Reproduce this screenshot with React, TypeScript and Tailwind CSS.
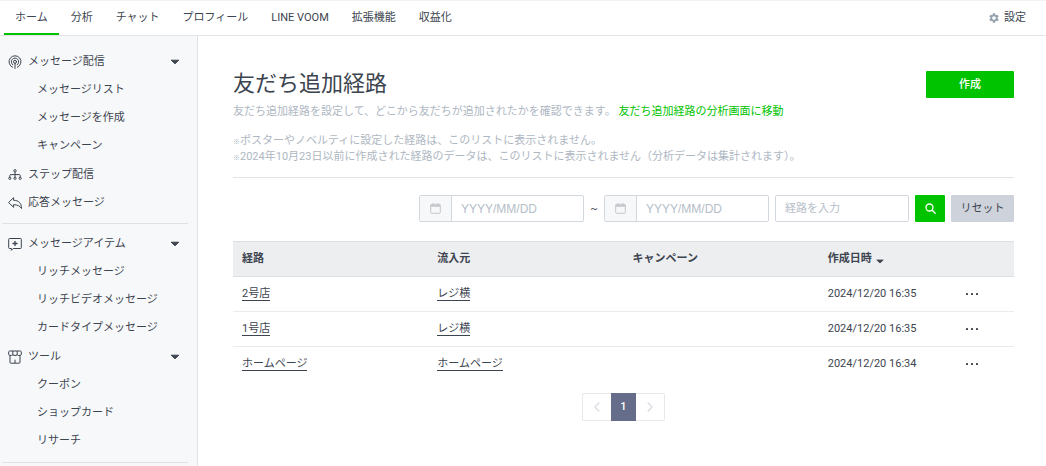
import React from 'react';
import { MdSettings } from 'react-icons/md';

type IconProps = { className?: string };

type MenuGroup = {
  label: string;
  icon: React.FC<IconProps>;
  items?: string[];
};

// Icons
const BroadcastIcon = ({ className }: IconProps) => (
  <svg viewBox="0 0 14 14" fill="none" stroke="currentColor" strokeLinecap="round" className={className} aria-hidden="true">
    <path d="M4.6 12.3a6 6 0 1 1 4.8 0" />
    <path d="M4.9 9.9a3.7 3.7 0 1 1 4.2 0" />
    <circle cx="7" cy="6.8" r="1.5" />
    <path d="M7 8.3v5.2" />
  </svg>
);

const StepIcon = ({ className }: IconProps) => (
  <svg viewBox="0 0 14 14" fill="none" stroke="currentColor" className={className} aria-hidden="true">
    <circle cx="7" cy="2.8" r="1.2" />
    <path d="M7 4v5.200M1.800 9.300V7.500q0-.9.900-.9h8.600q.9 0 .9.900v1.800" />
    <circle cx="1.800" cy="10.300" r="1.100" />
    <circle cx="7" cy="10.300" r="1.100" />
    <circle cx="12.200" cy="10.300" r="1.100" />
  </svg>
);

const ReplyIcon = ({ className }: IconProps) => (
  <svg viewBox="0 0 14 14" fill="none" stroke="currentColor" strokeLinejoin="round" className={className} aria-hidden="true">
    <path d="M.5 6.500 5.600 1.700v2.600c4.800 0 7.900 2.600 7.900 8.200-1.600-2.600-3.900-3.800-7.900-3.800v2.600z" />
  </svg>
);

const MessageItemIcon = ({ className }: IconProps) => (
  <svg viewBox="0 0 14 14" fill="none" stroke="currentColor" strokeLinejoin="round" className={className} aria-hidden="true">
    <path d="M1.500 1.500h11q.8 0 .8.800v8.400q0 .8-.8.800H5.200L3.400 13.300V11.500H1.500q-.8 0-.8-.8V2.300q0-.8.8-.8z" />
    <path d="M7 4v5M4.500 6.500h5" strokeWidth="1.300" />
  </svg>
);

const ShopIcon = ({ className }: IconProps) => (
  <svg viewBox="0 0 14 14" fill="none" stroke="currentColor" strokeLinejoin="round" className={className} aria-hidden="true">
    <path d="M1.500 1h11l.8.600v2.700a1.100 1.100 0 0 1-1.100 1.100H10.300a1.100 1.100 0 0 1-1.100-1.100 1.100 1.100 0 0 1-1.100 1.100H5.900a1.100 1.100 0 0 1-1.100-1.100 1.100 1.100 0 0 1-1.100 1.100H1.800A1.100 1.100 0 0 1 .7 4.300V1.600z" />
    <path d="M4.800 1v3.300M9.200 1v3.300M2 5.400v7q0 .8.800.8h8.400q.8 0 .8-.8v-7M7 13.200V9.700" />
  </svg>
);

const CaretIcon = ({ className }: IconProps) => (
  <svg viewBox="0 0 8 5" fill="currentColor" stroke="currentColor" strokeWidth=".8" strokeLinejoin="round" className={className} aria-hidden="true">
    <path d="M.8 1h6.400L4 4z" />
  </svg>
);

const CalendarIcon = ({ className }: IconProps) => (
  <svg viewBox="0 0 11 11" fill="none" stroke="currentColor" className={className} aria-hidden="true">
    <rect x=".7" y="1.300" width="9.600" height="9" rx="1" />
    <path d="M.7 2.800h9.600" strokeWidth="1.800" />
    <path d="M3 0v2M8 0v2" />
  </svg>
);

const SearchIcon = ({ className }: IconProps) => (
  <svg viewBox="0 0 11 11" fill="none" stroke="currentColor" strokeWidth="1.300" strokeLinecap="round" className={className} aria-hidden="true">
    <circle cx="4.500" cy="4.500" r="3.500" />
    <path d="m7.200 7.200 3 3" />
  </svg>
);

const ChevronIcon = ({ className }: IconProps) => (
  <svg viewBox="0 0 6 10" fill="none" stroke="currentColor" strokeWidth="1.400" className={className} aria-hidden="true">
    <path d="M5.300.5.900 5l4.400 4.500" />
  </svg>
);

const DotsIcon = ({ className }: IconProps) => (
  <svg viewBox="0 0 12 2" fill="currentColor" className={className} aria-hidden="true">
    <rect x="0" y="0" width="2" height="2" rx=".6" />
    <rect x="5" y="0" width="2" height="2" rx=".6" />
    <rect x="10" y="0" width="2" height="2" rx=".6" />
  </svg>
);

// Data
const TABS = ['ホーム', '分析', 'チャット', 'プロフィール', 'LINE VOOM', '拡張機能', '収益化'];

const MENU: MenuGroup[][] = [
  [
    { label: 'メッセージ配信', icon: BroadcastIcon, items: ['メッセージリスト', 'メッセージを作成', 'キャンペーン'] },
    { label: 'ステップ配信', icon: StepIcon },
    { label: '応答メッセージ', icon: ReplyIcon },
  ],
  [
    { label: 'メッセージアイテム', icon: MessageItemIcon, items: ['リッチメッセージ', 'リッチビデオメッセージ', 'カードタイプメッセージ'] },
    { label: 'ツール', icon: ShopIcon, items: ['クーポン', 'ショップカード', 'リサーチ'] },
  ],
];

const ROUTES = [
  { name: '2号店', source: 'レジ横', campaign: '', createdAt: '2024/12/20 16:35' },
  { name: '1号店', source: 'レジ横', campaign: '', createdAt: '2024/12/20 16:35' },
  { name: 'ホームページ', source: 'ホームページ', campaign: '', createdAt: '2024/12/20 16:34' },
];

const NOTES = [
  'ポスターやノベルティに設定した経路は、このリストに表示されません。',
  '2024年10月23日以前に作成された経路のデータは、このリストに表示されません（分析データは集計されます）。',
];

const Header = () => (
  <header className="flex h-9 items-stretch justify-between border-t border-b border-t-[#f3f3f4] border-b-[#e3e4e6] bg-white pl-1 pr-5">
    <nav className="flex gap-px">
      {TABS.map((tab, i) => (
        <a
          key={tab}
          href="#"
          className={`flex items-center border-b-2 px-[11px] pt-0.5 ${i === 0 ? 'border-[#00c300]' : 'border-transparent'}`}
        >
          {tab}
        </a>
      ))}
    </nav>
    <a href="#" className="flex items-center gap-1">
      <MdSettings className="size-3 text-[#97a3af]" />
      設定
    </a>
  </header>
);

const Sidebar = () => (
  <aside className="w-[198px] shrink-0 border-r border-[#e1e3e7] bg-[#f7f8fa] pt-3">
    {MENU.map((section, i) => (
      <div key={i} className="mb-1.5 last:mb-0">
        {section.map(({ label, icon: Icon, items }) => (
          <div key={label}>
            {items ? (
              <button type="button" className="flex h-7 w-full items-center gap-1.5 pl-2 pr-[17px] text-left">
                <Icon className="size-3.5" />
                <span className="flex-1">{label}</span>
                <CaretIcon className="h-1.5 w-2.5" />
              </button>
            ) : (
              <a href="#" className="flex h-7 items-center gap-1.5 pl-2">
                <Icon className="size-3.5" />
                {label}
              </a>
            )}
            {items && (
              <div className="pb-px">
                {items.map((item) => (
                  <a key={item} href="#" className="flex h-7 items-center pl-[37px]">
                    {item}
                  </a>
                ))}
              </div>
            )}
          </div>
        ))}
        <hr className="ml-0.5 mr-[9px] mt-1.5 border-[#dfe1e5]" />
      </div>
    ))}
  </aside>
);

const DateField = ({ label }: { label: string }) => (
  <label className="flex h-[27px] w-[165px] overflow-hidden rounded-xs border border-[#d3d7de] bg-white">
    <span className="flex w-8 shrink-0 items-center justify-center border-r border-[#d3d7de] bg-[#f7f8fa]">
      <CalendarIcon className="size-[11px] text-[#c3c6ca]" />
    </span>
    <input
      type="text"
      aria-label={label}
      placeholder="YYYY/MM/DD"
      className="w-full min-w-0 px-[9px] font-['Liberation_Sans',sans-serif] text-xs outline-none placeholder:text-[#b5bdc8]"
    />
  </label>
);

const Filters = () => (
  <form className="mt-[17px] flex items-center justify-end gap-1.5">
    <DateField label="開始日" />
    <span className="w-2 text-center">~</span>
    <DateField label="終了日" />
    <input
      type="text"
      aria-label="経路"
      placeholder="経路を入力"
      className="h-[27px] w-[134px] rounded-xs border border-[#d3d7de] px-[9px] outline-none placeholder:text-[#b5bdc8]"
    />
    <button type="button" aria-label="検索" className="flex h-[27px] w-[30px] items-center justify-center rounded-[1px] bg-[#00c300] text-white">
      <SearchIcon className="size-[11px]" />
    </button>
    <button type="button" className="h-[27px] w-[63px] rounded-[1px] bg-[#ced2da]">
      リセット
    </button>
  </form>
);

const RouteTable = () => (
  <table className="mt-[19px] w-full table-fixed text-left">
    <thead>
      <tr className="h-[35px] border-t border-b border-[#dcdfe4] bg-[#edeef0]">
        <th className="w-1/4 px-[9px] font-bold">経路</th>
        <th className="w-1/4 px-[9px] font-bold">流入元</th>
        <th className="w-1/4 px-[9px] font-bold">キャンペーン</th>
        <th className="px-[9px] font-bold">
          <button type="button" className="flex items-center gap-1">
            作成日時
            <CaretIcon className="mt-1 h-[5px] w-2" />
          </button>
        </th>
        <th className="w-[58px]" aria-label="操作" />
      </tr>
    </thead>
    <tbody>
      {ROUTES.map((route) => (
        <tr key={route.name} className="h-[35px] border-b border-[#eaebed] last:border-b-0">
          <td className="px-[9px]">
            <a href="#" className="inline-block border-b border-current leading-3">{route.name}</a>
          </td>
          <td className="px-[9px]">
            <a href="#" className="inline-block border-b border-current leading-3">{route.source}</a>
          </td>
          <td className="px-[9px]">{route.campaign}</td>
          <td className="px-[9px]">{route.createdAt}</td>
          <td className="px-2.5">
            <button type="button" aria-label="メニュー" className="flex h-4 items-center">
              <DotsIcon className="h-0.5 w-3" />
            </button>
          </td>
        </tr>
      ))}
    </tbody>
  </table>
);

const Pagination = () => (
  <nav className="mt-[11px] flex justify-center">
    <div className="flex h-7">
      <button type="button" aria-label="前へ" className="flex w-[29px] items-center justify-center rounded-l-xs border border-r-0 border-[#e6e8ec] text-[#d9dce2]">
        <ChevronIcon className="h-2.5 w-1.5" />
      </button>
      <button type="button" className="w-[25px] bg-[#656d8a] font-medium text-white">
        1
      </button>
      <button type="button" aria-label="次へ" className="flex w-[29px] items-center justify-center rounded-r-xs border border-l-0 border-[#e6e8ec] text-[#d9dce2]">
        <ChevronIcon className="h-2.5 w-1.5 rotate-180" />
      </button>
    </div>
  </nav>
);

function App() {
  return (
    <div className="flex min-h-screen flex-col bg-white font-[Roboto,'Noto_Sans_CJK_JP',sans-serif] text-[11px] leading-4 text-[#3c444f]">
      <Header />
      <div className="flex flex-1">
        <Sidebar />

        <main className="min-w-0 flex-1 pb-8 pl-[35px] pr-8 pt-8">
          <div className="flex items-start justify-between">
            <div>
              <h1 className="text-[22px] leading-8">友だち追加経路</h1>
              <p className="mt-1 text-[#aeb7c2]">
                友だち追加経路を設定して、どこから友だちが追加されたかを確認できます。{' '}
                <a href="#" className="text-[#00c300]">友だち追加経路の分析画面に移動</a>
              </p>
            </div>
            <button type="button" className="mt-[3px] h-[27px] w-[88px] rounded-[1px] bg-[#00c300] font-medium text-white">
              作成
            </button>
          </div>

          <div className="mt-[13px] border-b border-[#e3e4e6] pb-3 text-[#aeb7c2]">
            {NOTES.map((note) => (
              <p key={note}>
                <span className="text-[7px] font-bold leading-none">※</span>
                {note}
              </p>
            ))}
          </div>

          <Filters />
          <RouteTable />
          <Pagination />
        </main>
      </div>
    </div>
  );
}

export default App;
